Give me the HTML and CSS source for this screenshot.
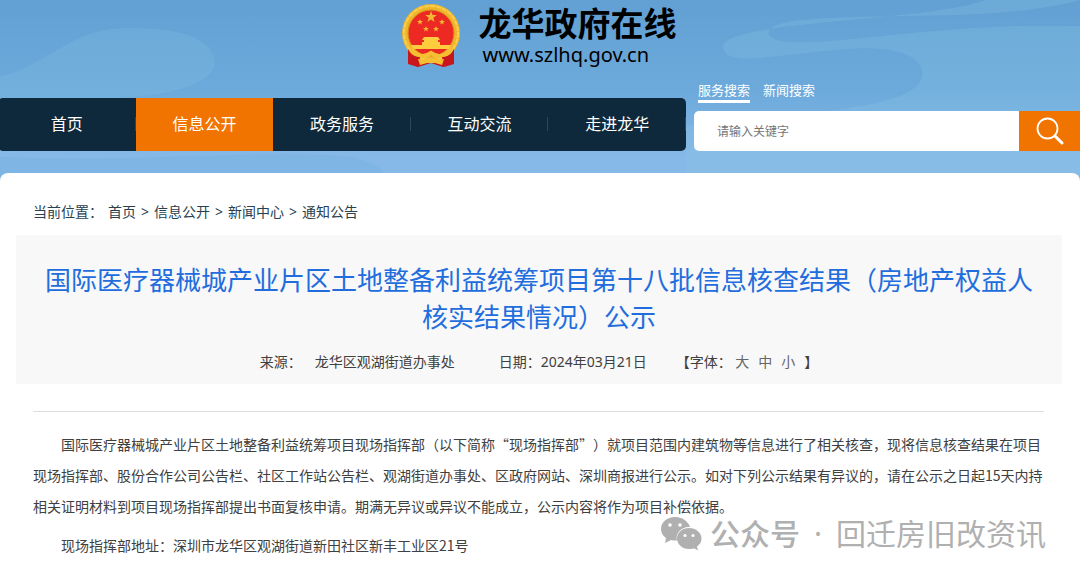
FILE: index.html
```
<!DOCTYPE html>
<html lang="zh-CN">
<head>
    <meta charset="UTF-8">
    <meta name="viewport" content="width=device-width, initial-scale=1.0">
    <title>龙华政府在线 - 通知公告</title>
    <link rel="stylesheet" href="styles.css">
</head>
<body>
    <header class="header">
        <svg class="header-bg" viewBox="0 0 1080 184" preserveAspectRatio="none" aria-hidden="true">
            <path fill="#8ec8e8" opacity=".2" d="M0 76C45 66 70 30 120 28C180 26 214 38 215 63C212 82 180 94 115 98H0Z"/>
            <path fill="#8cc8e4" opacity=".25" d="M985 0C930 22 715 20 723 48C728 70 790 50 865 48C905 48 925 60 922 76C918 95 880 105 810 112L686 125V184H1080V26C950 22 850 44 790 42C760 40 760 24 800 20C880 12 1000 22 1080 0Z"/>
            <path fill="#6eace0" opacity=".3" d="M0 156C130 162 260 148 350 156C372 160 382 168 386 175H0Z"/>
        </svg>
        <a class="logo" href="#">
            <svg class="emblem" viewBox="0 0 60 64" aria-hidden="true">
                <path fill="#c9161d" d="M8 44L7 60L17 64L30 60L42 64L52 60L51 44Z"/>
                <ellipse cx="30" cy="30" rx="29" ry="29" fill="#efb52c"/>
                <circle cx="30" cy="30" r="27" fill="none" stroke="#fbcf4a" stroke-width="2" stroke-dasharray="5 1"/>
                <circle cx="30" cy="30" r="23" fill="#ed2924" stroke="#d9901c"/>
                <path fill="#f0b834" d="M30 8l1.500 4h4.300l-3.500 2.700 1.300 4.300-3.600-2.600-3.600 2.600 1.300-4.300-3.500-2.700h4.300z"/>
                <g fill="#f0b834">
                    <path d="M19 16l.8 2h2.200l-1.800 1.400.7 2.200-1.900-1.300-1.900 1.300.7-2.200-1.800-1.400h2.200z"/>
                    <path d="M41 16l.8 2h2.200l-1.800 1.400.7 2.200-1.900-1.300-1.900 1.300.7-2.200-1.800-1.400h2.200z"/>
                    <path d="M25 23l.8 2h2.200l-1.800 1.400.7 2.200-1.900-1.300-1.900 1.300.7-2.200-1.800-1.400h2.200z"/>
                    <path d="M35 23l.8 2h2.200l-1.800 1.400.7 2.200-1.900-1.300-1.900 1.300.7-2.200-1.800-1.400h2.200z"/>
                </g>
                <path fill="#ffcc3e" d="M23 34h14l2 3h-2v2h2v3h11l-2 4H12l-2-4h11v-3h2v-2h-2z"/>
                <path fill="#ed2924" d="M15 46h30l-6 5-9-3-9 3z"/>
                <path fill="none" stroke="#f6bf32" stroke-width="4" d="M10 46C16 54 23 55 30 50C37 55 44 54 50 46"/>
                <path fill="#c9161d" d="M7 46c3 6 7 8 12 8l-2 10-10-3zM53 46c-3 6-7 8-12 8l2 10 10-3z"/>
                <path fill="#f6bf32" d="M24 55l6 2 6-2 1 2 6-1-2 6-7-2h-8l-7 2-2-6 6 1z"/>
            </svg>
            <span class="logo-text">
                <strong class="logo-name">龙华政府在线</strong>
                <span class="logo-url">www.szlhq.gov.cn</span>
            </span>
        </a>
        <div class="header-row">
            <nav class="nav">
                <a href="#">首页</a>
                <a href="#" class="active">信息公开</a>
                <a href="#">政务服务</a>
                <a href="#">互动交流</a>
                <a href="#">走进龙华</a>
            </nav>
            <form class="search">
                <div class="search-tabs">
                    <a href="#" class="active">服务搜索</a>
                    <a href="#">新闻搜索</a>
                </div>
                <div class="search-box">
                    <input type="text" placeholder="请输入关键字" aria-label="请输入关键字">
                    <button type="button" aria-label="搜索">
                        <svg viewBox="0 0 28 28" aria-hidden="true">
                            <circle cx="11.500" cy="11.500" r="10" fill="none" stroke="#fff" stroke-width="1.800"/>
                            <path d="M19 19l7 7" stroke="#fff" stroke-width="3" stroke-linecap="round"/>
                        </svg>
                    </button>
                </div>
            </form>
        </div>
    </header>

    <main class="content">
        <div class="breadcrumb">
            <span>当前位置：</span>
            <a href="#">首页</a>
            <span>&gt;</span>
            <a href="#">信息公开</a>
            <span>&gt;</span>
            <a href="#">新闻中心</a>
            <span>&gt;</span>
            <a href="#">通知公告</a>
        </div>

        <div class="title-box">
            <h1>国际医疗器械城产业片区土地整备利益统筹项目第十八批信息核查结果（房地产权益人核实结果情况）公示</h1>
            <div class="meta">
                <span class="meta-source"><span>来源：</span><span>龙华区观湖街道办事处</span></span>
                <span class="meta-date">日期：2024年03月21日</span>
                <span class="meta-size">【字体： <a href="#">大</a><a href="#">中</a><a href="#">小</a>】</span>
            </div>
        </div>

        <article class="article">
            <p>国际医疗器械城产业片区土地整备利益统筹项目现场指挥部（以下简称“现场指挥部”）就项目范围内建筑物等信息进行了相关核查，现将信息核查结果在项目现场指挥部、股份合作公司公告栏、社区工作站公告栏、观湖街道办事处、区政府网站、深圳商报进行公示。如对下列公示结果有异议的，请在公示之日起15天内持相关证明材料到项目现场指挥部提出书面复核申请。期满无异议或异议不能成立，公示内容将作为项目补偿依据。</p>
            <p>现场指挥部地址：深圳市龙华区观湖街道新田社区新丰工业区21号</p>
        </article>
    </main>

    <div class="watermark">
        <svg viewBox="0 0 42 36" aria-hidden="true">
            <path fill="#b0b0b0" d="M15 1C7 1 1 6 1 13c0 4 2 7 5 9l-1 5 6-3c2 .6 4 .7 6 .5C15 17 22 10 30 11 28 5 22 1 15 1z"/>
            <path fill="#b0b0b0" d="M29 12c-7 0-12 5-12 10.500S22 33 29 33c2 0 3-.2 5-.8l4 2.300-1-4c3-2 4.500-5 4.500-8C41.500 17 36 12 29 12z"/>
            <g fill="#fff"><circle cx="10" cy="9" r="1.800"/><circle cx="20" cy="9" r="1.800"/><circle cx="25" cy="19.500" r="1.500"/><circle cx="33" cy="19.500" r="1.500"/></g>
        </svg>
        <div class="watermark-text">
            <b>公众号</b>
            <span>·</span>
            <span>回迁房旧改资讯</span>
        </div>
    </div>
</body>
</html>
```
FILE: styles.css
```
* { margin: 0; padding: 0; box-sizing: border-box; }

body {
    font-family: "Noto Sans", "Noto Sans CJK SC", sans-serif;
    font-size: 14px;
    color: #404040;
    background: #fff;
    height: 100vh;
    overflow: hidden;
    position: relative;
}

a {
    color: inherit;
    text-decoration: none;
}

.header {
    position: relative;
    background: linear-gradient(180deg, #62a0d3 0%, #6daadc 50%, #86b9e7 85%, #86b9e7 100%);
    padding-bottom: 34px;
}

.header-bg {
    position: absolute;
    top: 0;
    left: 0;
    width: 100%;
    height: 100%;
}

.logo {
    position: relative;
    display: flex;
    justify-content: center;
    gap: 18px;
    padding: 3px 3px 0 0;
    color: #000;
}

.emblem {
    width: 60px;
    height: 64px;
}

.logo-text {
    display: flex;
    flex-direction: column;
}

.logo-name {
    font-size: 33px;
    line-height: 42px;
}

.logo-url {
    font-size: 20px;
    line-height: 20px;
    padding-left: 4px;
    font-weight: 400;
}

.header-row {
    position: relative;
    display: flex;
    align-items: flex-end;
    gap: 8px;
    margin: 13px 0 0 -2px;
}

.nav {
    display: flex;
    flex: 688;
    background: #0e293b;
    border-radius: 5px;
    overflow: hidden;
}

.nav a {
    position: relative;
    flex: 1;
    color: #fff;
    font-size: 16px;
    line-height: 53px;
    text-align: center;
}

.nav a:not(.active)::after {
    content: "";
    position: absolute;
    right: 0;
    top: 19px;
    width: 1px;
    height: 14px;
    background: #2d4656;
}

.nav .active {
    background: #f17400;
}

.search {
    flex: 386;
}

.search-tabs {
    display: flex;
    gap: 13px;
    padding-left: 4px;
    margin-bottom: 8px;
    color: #fff;
    font-size: 13px;
    line-height: 20px;
}

.search-tabs a {
    border-bottom: 3px solid transparent;
}

.search-tabs .active {
    border-color: #fff;
}

.search-box {
    display: flex;
    height: 40px;
}

.search-box input {
    flex: 1;
    min-width: 0;
    border: none;
    border-radius: 5px 0 0 5px;
    padding-left: 23px;
    background: #fff;
    font-family: inherit;
    font-size: 12px;
}

.search-box input::placeholder {
    color: #757575;
}

.search-box button {
    display: flex;
    align-items: center;
    justify-content: center;
    width: 61px;
    border: none;
    background: #f17400;
}

.search-box svg {
    width: 28px;
    height: 28px;
}

.content {
    position: relative;
    margin-top: -12px;
    padding: 29px 18px 0 16px;
    background: #fff;
    border-radius: 8px 8px 0 0;
}

.breadcrumb {
    display: flex;
    gap: 5px;
    padding-left: 17px;
    line-height: 20px;
    color: #29414f;
}

.title-box {
    margin-top: 13px;
    padding: 27px 24px 12px;
    background: #f8f8f8;
    text-align: center;
}

.title-box h1 {
    font-size: 26px;
    font-weight: 400;
    line-height: 37px;
    color: #226ddd;
}

.meta {
    display: flex;
    justify-content: center;
    margin-top: 15px;
    line-height: 21px;
}

.meta-source {
    display: flex;
    gap: 13px;
    margin-right: 44px;
}

.meta-date {
    margin-right: 29px;
}

.meta-size a {
    margin-right: 9px;
    color: #666;
}

.article {
    margin: 27px 18px 0 17px;
    padding-top: 17px;
    border-top: 1px solid #ddd;
    font-family: "Noto Sans CJK SC", sans-serif;
    text-spacing-trim: space-all;
}

.article p {
    line-height: 31px;
    margin-bottom: 8px;
    text-indent: 2em;
}

.watermark {
    position: absolute;
    right: 34px;
    bottom: 24px;
    display: flex;
    align-items: center;
    gap: 8px;
    color: #b0b0b0;
    font-size: 30px;
    line-height: 40px;
}

.watermark svg {
    width: 42px;
    height: 36px;
}

.watermark-text {
    display: flex;
    gap: 14px;
}

.watermark b {
    font-weight: 500;
}
```
